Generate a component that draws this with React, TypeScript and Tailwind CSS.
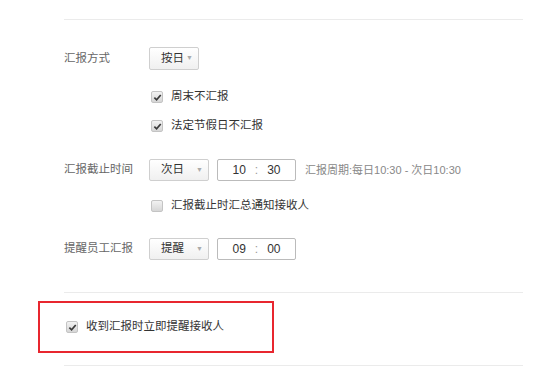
import React from "react";

const font = { fontFamily: '"Liberation Sans", "Noto Sans CJK SC", sans-serif' };

const Check = ({ checked, label }: { checked: boolean; label: string }) => (
  <label className="flex h-[16px] items-center gap-[8px] whitespace-nowrap text-[11.5px] text-[#333]">
    <span className="flex h-[12px] w-[12px] shrink-0 items-center justify-center rounded-[2px] border border-[#c4c4c4] bg-gradient-to-b from-[#f2f2f2] to-[#d6d6d6]">
      {checked && (
        <svg viewBox="0 0 10 10" className="h-[9px] w-[9px]">
          <path d="M1.5 5.2 L4 7.6 L8.6 2.2" fill="none" stroke="#3a3a3a" strokeWidth="1.9" />
        </svg>
      )}
    </span>
    {label}
  </label>
);

const Select = ({ value, width, height }: { value: string; width: string; height: string }) => (
  <div
    className={`flex shrink-0 items-center justify-between whitespace-nowrap rounded-[2px] border border-[#cfcfcf] bg-gradient-to-b from-white to-[#f0f0f0] pl-[11px] pr-[5px] text-[11.5px] text-[#333] ${width} ${height}`}
  >
    <span>{value}</span>
    <span className="text-[7px] text-[#aaa]">▼</span>
  </div>
);

const TimeBox = ({ h, m }: { h: string; m: string }) => (
  <div className="flex h-[22px] w-[79px] items-center justify-center gap-[9px] rounded-[2px] border border-[#bbb] bg-white text-[12px] text-[#333]">
    <span>{h}</span>
    <span className="text-[#999]">:</span>
    <span>{m}</span>
  </div>
);

export default function App() {
  return (
    <div className="h-[382px] w-[551px] bg-white" style={font}>
      <div className="pl-[64px] pr-[28px] pt-[19px]">
        <div className="h-px bg-[#ebebeb]" />

        <div className="mt-[27px] flex h-[23px] items-center">
          <div className="w-[85px] text-[11.5px] text-[#666]">汇报方式</div>
          <Select value="按日" width="w-[50px]" height="h-[23px]" />
        </div>

        <div className="ml-[87px]">
          <div className="mt-[19px]">
            <Check checked label="周末不汇报" />
          </div>
          <div className="mt-[13px]">
            <Check checked label="法定节假日不汇报" />
          </div>
        </div>

        <div className="mt-[25px] flex h-[22px] items-center">
          <div className="w-[85px] text-[11.5px] text-[#666]">汇报截止时间</div>
          <Select value="次日" width="w-[60px]" height="h-[22px]" />
          <div className="ml-[8px]">
            <TimeBox h="10" m="30" />
          </div>
          <div className="ml-[9px] whitespace-nowrap text-[11px] text-[#888]">汇报周期:每日10:30 - 次日10:30</div>
        </div>

        <div className="ml-[87px] mt-[17px]">
          <Check checked={false} label="汇报截止时汇总通知接收人" />
        </div>

        <div className="mt-[24px] flex h-[22px] items-center">
          <div className="w-[85px] text-[11.5px] text-[#666]">提醒员工汇报</div>
          <Select value="提醒" width="w-[60px]" height="h-[22px]" />
          <div className="ml-[8px]">
            <TimeBox h="09" m="00" />
          </div>
        </div>

        <div className="mt-[32px] h-px bg-[#ebebeb]" />

        <div className="-ml-[26px] mt-[8px] flex h-[52px] w-[236px] items-center border-2 border-[#e8262f] pl-[26px]">
          <Check checked label="收到汇报时立即提醒接收人" />
        </div>

        <div className="mt-[12px] h-px bg-[#ebebeb]" />
      </div>
    </div>
  );
}
